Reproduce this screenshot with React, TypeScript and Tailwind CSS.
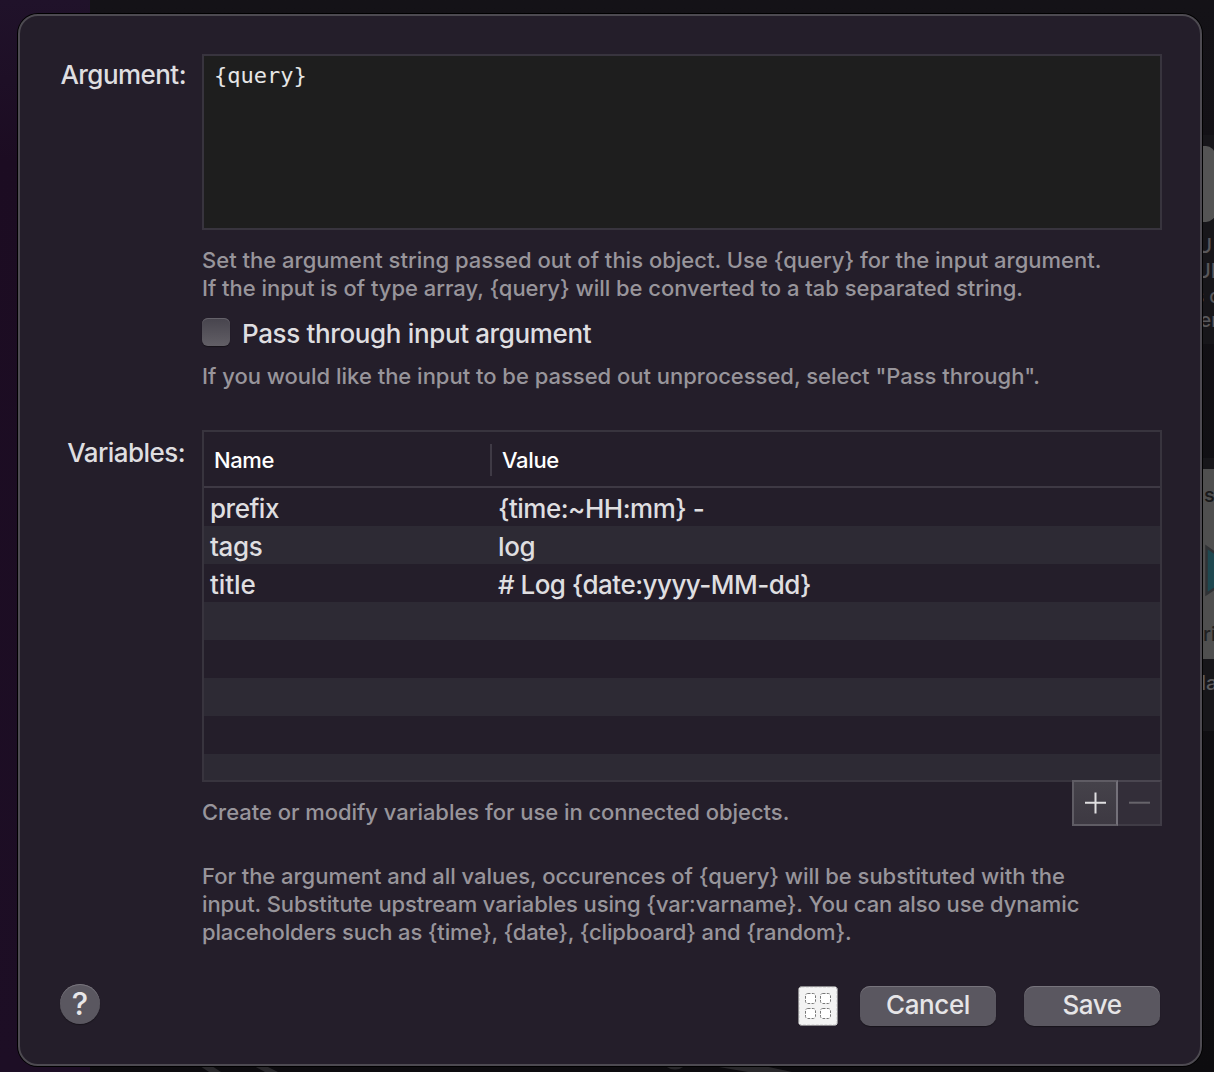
import type { ReactNode } from "react";

type Line = { text: string; tracking: string };

const argumentHelp: Line[] = [
  { text: "Set the argument string passed out of this object. Use {query} for the input argument.", tracking: "tracking-[0.005px]" },
  { text: "If the input is of type array, {query} will be converted to a tab separated string.", tracking: "tracking-[-0.03px]" },
];

const passHelp: Line[] = [
  { text: 'If you would like the input to be passed out unprocessed, select "Pass through".', tracking: "tracking-[-0.015px]" },
];

const variablesHelp: Line[] = [
  { text: "Create or modify variables for use in connected objects.", tracking: "tracking-[-0.04px]" },
];

const substitutionHelp: Line[] = [
  { text: "For the argument and all values, occurences of {query} will be substituted with the", tracking: "tracking-[-0.035px]" },
  { text: "input. Substitute upstream variables using {var:varname}. You can also use dynamic", tracking: "tracking-[-0.095px]" },
  { text: "placeholders such as {time}, {date}, {clipboard} and {random}.", tracking: "tracking-[-0.16px]" },
];

const rows = [
  { name: "prefix", value: "{time:~HH:mm} -", nameTracking: "tracking-[-0.5px]", valueTracking: "tracking-[-0.5px]" },
  { name: "tags", value: "log", nameTracking: "tracking-[-0.4px]", valueTracking: "tracking-[-0.4px]" },
  { name: "title", value: "# Log {date:yyyy-MM-dd}", nameTracking: "tracking-[-0.1px]", valueTracking: "tracking-[-0.52px]" },
  { name: "", value: "", nameTracking: "", valueTracking: "" },
  { name: "", value: "", nameTracking: "", valueTracking: "" },
  { name: "", value: "", nameTracking: "", valueTracking: "" },
  { name: "", value: "", nameTracking: "", valueTracking: "" },
  { name: "", value: "", nameTracking: "", valueTracking: "" },
];

function Help({ lines, className }: { lines: Line[]; className: string }) {
  return (
    <div className={`text-[22px] leading-7 text-[#98959b] ${className}`}>
      {lines.map((l) => (
        <p key={l.text} className={l.tracking}>{l.text}</p>
      ))}
    </div>
  );
}

function PushButton({ children, className }: { children: ReactNode; className: string }) {
  return (
    <button
      className={`flex h-10 w-[136px] justify-center rounded-[10px] bg-[#5a5760] text-[26px] leading-[38px] text-[#e6e5e7] shadow-[inset_0_1px_0_#77747c,0_1px_1px_rgba(0,0,0,0.35)] ${className}`}
    >
      {children}
    </button>
  );
}

function GridIcon() {
  return (
    <svg className="h-10 w-10" viewBox="0 0 40 40" fill="none">
      <rect x="0.5" y="0.5" width="39" height="39" rx="3" fill="#f3f3f3" />
      <rect x="0.7" y="0.7" width="38.6" height="38.6" rx="2.8" stroke="#8b8a8c" strokeWidth="1" strokeDasharray="3 1.3" />
      {[7, 22].map((y) =>
        [7, 22].map((x) => (
          <rect key={`${x}-${y}`} x={x + 0.5} y={y + 0.5} width="10" height="10" rx="2.2" fill="#fff" stroke="#777" strokeWidth="1" strokeDasharray="2.8 1.3" />
        )),
      )}
    </svg>
  );
}

/* Slivers of the workflow window that show around the sheet. */
function Backdrop() {
  return (
    <div className="absolute inset-0 flex">
      <div className="w-[90px] bg-linear-to-b from-[#20122a] via-[#1c0c22] via-15% to-[#1d0e25]" />
      <div className="relative flex-1 bg-linear-to-b from-[#141217] to-[#0d0c0f]">
        <div className="absolute top-[135px] right-0 h-[209px] w-6 overflow-hidden bg-[#17161a] text-[20px] text-[#58575a]">
          <div className="absolute top-[11px] left-[-24px] h-[76px] w-[49px] rounded-[9px] bg-[#545454]" />
          <div className="absolute top-[98px] right-[2px] leading-[26px]">U</div>
          <div className="absolute top-[123px] left-[6px] leading-[26px]">UI</div>
          <div className="absolute top-[149px] left-[4px] text-[19px] leading-[25px] whitespace-nowrap">s c</div>
          <div className="absolute top-[173px] left-[10px] text-[19px] leading-[25px]">en</div>
        </div>
        <div className="absolute top-[458px] right-0 h-[273px] w-6 overflow-hidden bg-[#17161a]">
          <div className="absolute top-[11px] left-0 h-[190px] w-6 bg-[#4f4f4f]" />
          <div className="absolute top-[25px] left-[14px] text-[20px] leading-[24px] text-[#19191a]">s</div>
          <svg className="absolute top-[86px] left-[15px] h-[54px] w-10" viewBox="0 0 40 54">
            <path d="M1.5 3 L36 27 L1.5 50 Z" fill="#1e4850" stroke="#303235" strokeWidth="2.5" />
          </svg>
          <div className="absolute top-[164px] left-[13px] text-[20px] leading-[24px] text-[#212122]">ri</div>
          <div className="absolute top-[213px] left-[11px] text-[20px] leading-[24px] text-[#5b5a5d]">la</div>
        </div>
        <svg className="absolute bottom-0 left-0 h-2 w-[1124px]" viewBox="0 0 1124 8" fill="#29282b">
          <path d="M110 2 L122 2 L131 8 L119 8 Z" />
          <path d="M164 2 L176 2 L188 8 L175 8 Z" />
          <path d="M575 2 L595 2 Q585 9 575 2 Z" />
          <path d="M623 2 L674 2 L702 8 L658 8 Z" />
        </svg>
      </div>
    </div>
  );
}

export default function App() {
  return (
    <div className="relative flow-root h-[1072px] w-[1214px] overflow-hidden bg-[#121015] font-['Inter',sans-serif] font-[450] whitespace-nowrap">
      <Backdrop />
      <main className="relative mt-[14px] ml-[18px] flex h-[1052px] w-[1184px] flex-col rounded-[20px] border-2 border-[#4d4a51] bg-[#241e2a] pt-[38px] pl-10 shadow-[0_0_0_1px_#000]">
        <section className="flex">
          <div className="w-[142px] pt-1 pr-[16px] text-right text-[26px] leading-[34px] tracking-[-0.55px] text-[#dfdee0]">Argument:</div>
          <div className="w-[960px]">
            <div className="h-[176px] border-2 border-[#38343e] bg-[#1e1e1e] px-[10px] py-[7px] font-['DejaVu_Sans_Mono',monospace] text-[22px] leading-[26px] font-normal text-[#e6e6e6]">
              {"{query}"}
            </div>
            <Help lines={argumentHelp} className="mt-4" />
            <div className="mt-[13px] flex h-[36px] items-center">
              <div className="-mt-[2px] h-7 w-7 rounded-md bg-linear-to-b from-[#47444d] to-[#625f66] shadow-[inset_0_1px_0_#65626a,0_1px_1px_rgba(0,0,0,0.4)]" />
              <span className="ml-3 pt-[2px] text-[26px] leading-[34px] tracking-[-0.36px] text-[#dfdee0]">Pass through input argument</span>
            </div>
            <Help lines={passHelp} className="mt-[11px]" />
          </div>
        </section>

        <section className="mt-10 flex">
          <div className="w-[142px] pt-[6px] pr-[17px] text-right text-[26px] leading-[34px] tracking-[-0.55px] text-[#dfdee0]">Variables:</div>
          <div className="w-[960px]">
            <div className="h-[352px] overflow-hidden border-2 border-[#38343e]">
              <div className="flex h-14 items-center border-b-2 border-[#3e3944] pt-[2px] text-[22px] font-medium text-white">
                <div className="flex h-8 w-[288px] items-center border-r-2 border-[#3f3a45] pl-[10px] tracking-[-0.4px]">Name</div>
                <div className="pl-[10px] tracking-[-0.35px]">Value</div>
              </div>
              {rows.map((r, i) => (
                <div key={i} className="flex h-[38px] items-center pb-[1px] pl-[6px] text-[26px] leading-9 text-[#dfdee0] even:bg-[#241e2a] odd:bg-[#2d2a34]">
                  <div className={`w-[288px] pt-1 ${r.nameTracking}`}>{r.name}</div>
                  <div className={`pt-1 ${r.valueTracking}`}>{r.value}</div>
                </div>
              ))}
            </div>
            <div className="-mt-[2px] flex h-[46px] items-start justify-between">
              <Help lines={variablesHelp} className="mt-[18px]" />
              <div className="relative flex h-[46px]">
                <button className="flex w-[46px] items-center justify-center border-2 border-[#5f5c64] border-r-[#74717a] bg-linear-to-b from-[#45424a] to-[#3d3942]">
                  <svg className="h-[22px] w-[22px]" viewBox="0 0 22 22" stroke="#e0dfe1" strokeWidth="2">
                    <path d="M11.5 .5V21.5M1 10.7H22" />
                  </svg>
                </button>
                <button className="flex w-11 items-center justify-center border-2 border-l-0 border-[#403c46] border-t-[#4a4650] bg-[#332e39]">
                  <svg className="h-[22px] w-[22px]" viewBox="0 0 22 22" stroke="#67646b" strokeWidth="2">
                    <path d="M1 10.7H22" />
                  </svg>
                </button>
              </div>
            </div>
            <Help lines={substitutionHelp} className="mt-9" />
          </div>
        </section>

        <footer className="mt-10 flex w-[1100px] items-center">
          <button className="-mt-1 h-10 w-10 rounded-full bg-[#5a5760] text-center text-[31px] leading-10 text-[#e8e7e9] shadow-[inset_0_1px_0_#77747c,0_1px_1px_rgba(0,0,0,0.35)]">?</button>
          <div className="ml-auto mr-[22px]">
            <GridIcon />
          </div>
          <PushButton className="mr-7 tracking-[-0.4px]">Cancel</PushButton>
          <PushButton className="tracking-[-0.5px]">Save</PushButton>
        </footer>
      </main>
    </div>
  );
}
